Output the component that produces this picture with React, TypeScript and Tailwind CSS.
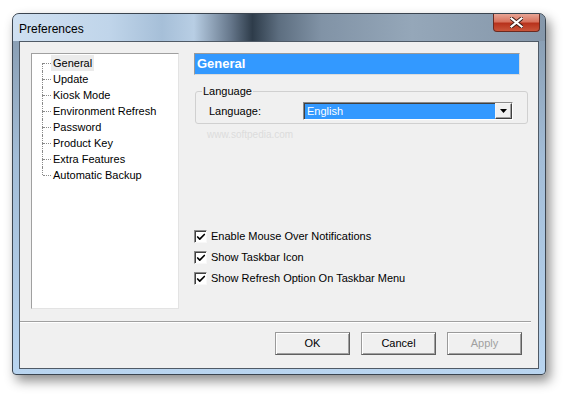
import { Check } from "lucide-react";

const font = "font-['Liberation_Sans',Tahoma,Arial,sans-serif]";

const items = [
  "General",
  "Update",
  "Kiosk Mode",
  "Environment Refresh",
  "Password",
  "Product Key",
  "Extra Features",
  "Automatic Backup",
];

const options = [
  "Enable Mouse Over Notifications",
  "Show Taskbar Icon",
  "Show Refresh Option On Taskbar Menu",
];

function TreeRow({ label, index }: { label: string; index: number }) {
  const first = index === 0;
  const last = index === items.length - 1;
  return (
    <div className="flex h-4 items-center">
      <div className="relative h-4 w-[18px] shrink-0">
        {!first && (
          <div className="absolute left-[9px] top-0 h-2 border-l border-dotted border-[#8a8a8a]" />
        )}
        {!last && (
          <div className="absolute left-[9px] top-2 h-2 border-l border-dotted border-[#8a8a8a]" />
        )}
        <div className="absolute left-[10px] top-2 w-2 border-t border-dotted border-[#8a8a8a]" />
      </div>
      <span
        className={
          "h-4 px-[2px] leading-4 " + (first ? "bg-[#ebebeb]" : "")
        }
      >
        {label}
      </span>
    </div>
  );
}

function Button({ label, disabled }: { label: string; disabled?: boolean }) {
  return (
    <button
      className={
        "h-[23px] w-[75px] border border-[#9a9a9a] border-r-[#5f5f5f] border-b-[#5f5f5f] bg-[#f0f0f0] text-[11px] shadow-[inset_1px_1px_0_#ffffff,inset_-1px_-1px_0_#a0a0a0] " +
        (disabled ? "text-[#a0a0a0]" : "text-black")
      }
    >
      {label}
    </button>
  );
}

export default function App() {
  return (
    <div className={"h-[395px] w-[567px] bg-white pl-3 pt-[13px] " + font}>
      <div className="flex h-[362px] w-[534px] flex-col rounded-t-[7px] rounded-b-[4px] border border-[#3b4550] bg-[image:linear-gradient(180deg,#8599ad_0%,#a3bdd7_40%,#b9d5f0_100%)] shadow-[4px_6px_12px_rgba(0,0,0,0.45)]">
        {/* title bar */}
        <div className="relative flex h-[27px] items-start overflow-hidden rounded-t-[6px] bg-[image:linear-gradient(90deg,#cfe0f1_0%,#c0d5ea_18%,#a6bfd8_28%,#b8cee4_34%,#65768a_41%,#2e3c4a_45%,#5d6e80_50%,#8193a6_58%,#95a7b9_75%,#8597aa_100%)]">
          <span className="mt-[6px] pl-[6px] text-[12px] text-black">Preferences</span>
          <div className="absolute right-[5px] top-0 flex h-[18px] w-[47px] items-center justify-center rounded-b-[4px] border border-t-0 border-[#6b2a20] bg-[image:linear-gradient(180deg,#e8a595_0%,#d8735e_45%,#b8321c_55%,#c9553a_100%)]">
            <svg width="13" height="11" viewBox="0 0 13 11">
              <path
                d="M1.5 1.5 L11.5 9.5 M11.5 1.5 L1.5 9.5"
                stroke="#3a1a14"
                strokeWidth="4"
                strokeLinecap="square"
              />
              <path
                d="M1.5 1.5 L11.5 9.5 M11.5 1.5 L1.5 9.5"
                stroke="#ffffff"
                strokeWidth="2.2"
                strokeLinecap="square"
              />
            </svg>
          </div>
        </div>

        {/* client area */}
        <div className="mx-[6px] mb-[5px] flex flex-1 flex-col border border-[#4f5a66] bg-[#f0f0f0] text-[11px] text-black">
          <div className="flex gap-[15px] pl-[11px] pr-[10px] pt-[11px]">
            {/* tree */}
            <div className="h-[256px] w-[148px] shrink-0 border border-[#a0a0a0] border-r-[#e3e3e3] border-b-[#e3e3e3] bg-white pl-px pt-px">
              {items.map((label, i) => (
                <TreeRow key={label} label={label} index={i} />
              ))}
            </div>

            {/* right panel */}
            <div className="flex flex-1 flex-col">
              <div className="h-[22px] w-[326px] border border-[#9a9a9a] border-r-[#dcdcdc] border-b-[#dcdcdc] bg-[#3399ff] pl-[2px] text-[13px] font-bold leading-5 text-white">
                General
              </div>

              <div className="relative ml-px mt-[16px] h-[33px] rounded-[3px] border border-[#d0d0d0]">
                <span className="absolute left-[6px] top-[-8px] bg-[#f0f0f0] px-px leading-[14px]">
                  Language
                </span>
                <div className="flex items-center pl-[13px] pt-[10px]">
                  <span className="w-[94px]">Language:</span>
                  <div className="flex h-[18px] w-[210px] border border-[#8a8a8a] border-r-[#ffffff] border-b-[#ffffff] shadow-[inset_1px_1px_0_#404040]">
                    <div className="ml-px mt-px flex-1 bg-[#3399ff] pl-[2px] leading-[15px] text-white">
                      English
                    </div>
                    <div className="flex w-[17px] items-center justify-center border border-[#f6f6f6] border-r-[#404040] border-b-[#404040] bg-[#f0f0f0] shadow-[inset_-1px_-1px_0_#a0a0a0]">
                      <svg width="7" height="4" viewBox="0 0 7 4">
                        <path d="M0 0 H7 L3.5 4 Z" fill="#000" />
                      </svg>
                    </div>
                  </div>
                </div>
              </div>
              <span className="ml-[13px] mt-[5px] text-[10px] leading-[12px] text-[#dcdcdc]">
                www.softpedia.com
              </span>

              <div className="mt-[89px] flex flex-col gap-2">
                {options.map((o) => (
                  <label key={o} className="flex h-[13px] items-center gap-[4px] leading-[13px]">
                    <span className="flex h-[13px] w-[13px] items-center justify-center border border-[#8a8a8a] border-r-[#f8f8f8] border-b-[#f8f8f8] bg-white shadow-[inset_1px_1px_0_#404040]">
                      <Check size={10} strokeWidth={4} color="#000" className="ml-px mt-px" />
                    </span>
                    <span>{o}</span>
                  </label>
                ))}
              </div>
            </div>
          </div>

          <div className="mr-[7px] mt-[12px] border-t border-[#a0a0a0] border-b border-b-white" />

          <div className="flex justify-end gap-[11px] pr-[16px] pt-[9px]">
            <Button label="OK" />
            <Button label="Cancel" />
            <Button label="Apply" disabled />
          </div>
        </div>
      </div>
    </div>
  );
}
